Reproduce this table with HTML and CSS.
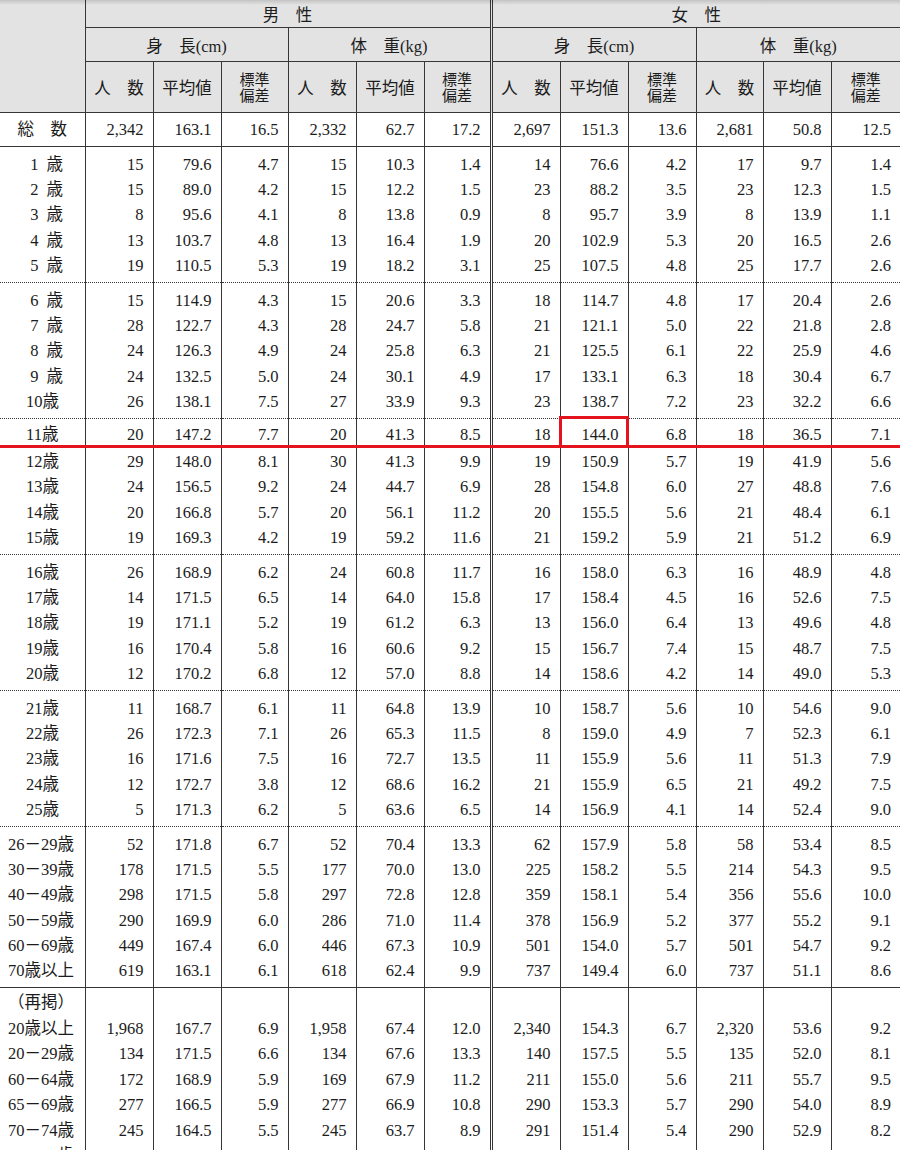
FILE: index.html
```html
<!DOCTYPE html>
<html lang="ja">
<head>
<meta charset="utf-8">
<title>身長・体重の平均値及び標準偏差</title>
<link rel="stylesheet" href="styles.css">
</head>
<body>
<div class="wrap">
<table class="stats">
<colgroup>
<col class="c-label"><col class="c68"><col class="c68"><col class="c67"><col class="c68"><col class="c68"><col class="c67"><col class="c69"><col class="c68"><col class="c68"><col class="c67"><col class="c68"><col class="c69">
</colgroup>
<thead>
<tr class="h1">
<th class="corner" rowspan="3"></th>
<th colspan="6">男　性</th>
<th colspan="6" class="fem">女　性</th>
</tr>
<tr class="h2">
<th colspan="3">身　長(cm)</th>
<th colspan="3">体　重(kg)</th>
<th colspan="3" class="fem">身　長(cm)</th>
<th colspan="3">体　重(kg)</th>
</tr>
<tr class="h3">
<th>人　数</th><th>平均値</th><th class="sd">標準<br>偏差</th>
<th>人　数</th><th>平均値</th><th class="sd">標準<br>偏差</th>
<th class="fem">人　数</th><th>平均値</th><th class="sd">標準<br>偏差</th>
<th>人　数</th><th>平均値</th><th class="sd">標準<br>偏差</th>
</tr>
</thead>
<tbody>
<tr class="total"><td class="lab center">総　数</td><td>2,342</td><td>163.1</td><td>16.5</td><td>2,332</td><td>62.7</td><td>17.2</td><td class="fem">2,697</td><td>151.3</td><td>13.6</td><td>2,681</td><td>50.8</td><td>12.5</td></tr>

<tr class="top"><td class="lab age"><span class="one">1</span>歳</td><td>15</td><td>79.6</td><td>4.7</td><td>15</td><td>10.3</td><td>1.4</td><td class="fem">14</td><td>76.6</td><td>4.2</td><td>17</td><td>9.7</td><td>1.4</td></tr>
<tr><td class="lab age"><span class="one">2</span>歳</td><td>15</td><td>89.0</td><td>4.2</td><td>15</td><td>12.2</td><td>1.5</td><td class="fem">23</td><td>88.2</td><td>3.5</td><td>23</td><td>12.3</td><td>1.5</td></tr>
<tr><td class="lab age"><span class="one">3</span>歳</td><td>8</td><td>95.6</td><td>4.1</td><td>8</td><td>13.8</td><td>0.9</td><td class="fem">8</td><td>95.7</td><td>3.9</td><td>8</td><td>13.9</td><td>1.1</td></tr>
<tr><td class="lab age"><span class="one">4</span>歳</td><td>13</td><td>103.7</td><td>4.8</td><td>13</td><td>16.4</td><td>1.9</td><td class="fem">20</td><td>102.9</td><td>5.3</td><td>20</td><td>16.5</td><td>2.6</td></tr>
<tr class="bot"><td class="lab age"><span class="one">5</span>歳</td><td>19</td><td>110.5</td><td>5.3</td><td>19</td><td>18.2</td><td>3.1</td><td class="fem">25</td><td>107.5</td><td>4.8</td><td>25</td><td>17.7</td><td>2.6</td></tr>

<tr class="top sep"><td class="lab age"><span class="one">6</span>歳</td><td>15</td><td>114.9</td><td>4.3</td><td>15</td><td>20.6</td><td>3.3</td><td class="fem">18</td><td>114.7</td><td>4.8</td><td>17</td><td>20.4</td><td>2.6</td></tr>
<tr><td class="lab age"><span class="one">7</span>歳</td><td>28</td><td>122.7</td><td>4.3</td><td>28</td><td>24.7</td><td>5.8</td><td class="fem">21</td><td>121.1</td><td>5.0</td><td>22</td><td>21.8</td><td>2.8</td></tr>
<tr><td class="lab age"><span class="one">8</span>歳</td><td>24</td><td>126.3</td><td>4.9</td><td>24</td><td>25.8</td><td>6.3</td><td class="fem">21</td><td>125.5</td><td>6.1</td><td>22</td><td>25.9</td><td>4.6</td></tr>
<tr><td class="lab age"><span class="one">9</span>歳</td><td>24</td><td>132.5</td><td>5.0</td><td>24</td><td>30.1</td><td>4.9</td><td class="fem">17</td><td>133.1</td><td>6.3</td><td>18</td><td>30.4</td><td>6.7</td></tr>
<tr class="bot"><td class="lab age">10歳</td><td>26</td><td>138.1</td><td>7.5</td><td>27</td><td>33.9</td><td>9.3</td><td class="fem">23</td><td>138.7</td><td>7.2</td><td>23</td><td>32.2</td><td>6.6</td></tr>

<tr class="sep r11"><td class="lab age">11歳</td><td>20</td><td>147.2</td><td>7.7</td><td>20</td><td>41.3</td><td>8.5</td><td class="fem">18</td><td>144.0</td><td>6.8</td><td>18</td><td>36.5</td><td>7.1</td></tr>
<tr class="r12"><td class="lab age">12歳</td><td>29</td><td>148.0</td><td>8.1</td><td>30</td><td>41.3</td><td>9.9</td><td class="fem">19</td><td>150.9</td><td>5.7</td><td>19</td><td>41.9</td><td>5.6</td></tr>
<tr><td class="lab age">13歳</td><td>24</td><td>156.5</td><td>9.2</td><td>24</td><td>44.7</td><td>6.9</td><td class="fem">28</td><td>154.8</td><td>6.0</td><td>27</td><td>48.8</td><td>7.6</td></tr>
<tr><td class="lab age">14歳</td><td>20</td><td>166.8</td><td>5.7</td><td>20</td><td>56.1</td><td>11.2</td><td class="fem">20</td><td>155.5</td><td>5.6</td><td>21</td><td>48.4</td><td>6.1</td></tr>
<tr class="bot"><td class="lab age">15歳</td><td>19</td><td>169.3</td><td>4.2</td><td>19</td><td>59.2</td><td>11.6</td><td class="fem">21</td><td>159.2</td><td>5.9</td><td>21</td><td>51.2</td><td>6.9</td></tr>

<tr class="top sep"><td class="lab age">16歳</td><td>26</td><td>168.9</td><td>6.2</td><td>24</td><td>60.8</td><td>11.7</td><td class="fem">16</td><td>158.0</td><td>6.3</td><td>16</td><td>48.9</td><td>4.8</td></tr>
<tr><td class="lab age">17歳</td><td>14</td><td>171.5</td><td>6.5</td><td>14</td><td>64.0</td><td>15.8</td><td class="fem">17</td><td>158.4</td><td>4.5</td><td>16</td><td>52.6</td><td>7.5</td></tr>
<tr><td class="lab age">18歳</td><td>19</td><td>171.1</td><td>5.2</td><td>19</td><td>61.2</td><td>6.3</td><td class="fem">13</td><td>156.0</td><td>6.4</td><td>13</td><td>49.6</td><td>4.8</td></tr>
<tr><td class="lab age">19歳</td><td>16</td><td>170.4</td><td>5.8</td><td>16</td><td>60.6</td><td>9.2</td><td class="fem">15</td><td>156.7</td><td>7.4</td><td>15</td><td>48.7</td><td>7.5</td></tr>
<tr class="bot"><td class="lab age">20歳</td><td>12</td><td>170.2</td><td>6.8</td><td>12</td><td>57.0</td><td>8.8</td><td class="fem">14</td><td>158.6</td><td>4.2</td><td>14</td><td>49.0</td><td>5.3</td></tr>

<tr class="top sep"><td class="lab age">21歳</td><td>11</td><td>168.7</td><td>6.1</td><td>11</td><td>64.8</td><td>13.9</td><td class="fem">10</td><td>158.7</td><td>5.6</td><td>10</td><td>54.6</td><td>9.0</td></tr>
<tr><td class="lab age">22歳</td><td>26</td><td>172.3</td><td>7.1</td><td>26</td><td>65.3</td><td>11.5</td><td class="fem">8</td><td>159.0</td><td>4.9</td><td>7</td><td>52.3</td><td>6.1</td></tr>
<tr><td class="lab age">23歳</td><td>16</td><td>171.6</td><td>7.5</td><td>16</td><td>72.7</td><td>13.5</td><td class="fem">11</td><td>155.9</td><td>5.6</td><td>11</td><td>51.3</td><td>7.9</td></tr>
<tr><td class="lab age">24歳</td><td>12</td><td>172.7</td><td>3.8</td><td>12</td><td>68.6</td><td>16.2</td><td class="fem">21</td><td>155.9</td><td>6.5</td><td>21</td><td>49.2</td><td>7.5</td></tr>
<tr class="bot"><td class="lab age">25歳</td><td>5</td><td>171.3</td><td>6.2</td><td>5</td><td>63.6</td><td>6.5</td><td class="fem">14</td><td>156.9</td><td>4.1</td><td>14</td><td>52.4</td><td>9.0</td></tr>

<tr class="top sep"><td class="lab">26－29歳</td><td>52</td><td>171.8</td><td>6.7</td><td>52</td><td>70.4</td><td>13.3</td><td class="fem">62</td><td>157.9</td><td>5.8</td><td>58</td><td>53.4</td><td>8.5</td></tr>
<tr><td class="lab">30－39歳</td><td>178</td><td>171.5</td><td>5.5</td><td>177</td><td>70.0</td><td>13.0</td><td class="fem">225</td><td>158.2</td><td>5.5</td><td>214</td><td>54.3</td><td>9.5</td></tr>
<tr><td class="lab">40－49歳</td><td>298</td><td>171.5</td><td>5.8</td><td>297</td><td>72.8</td><td>12.8</td><td class="fem">359</td><td>158.1</td><td>5.4</td><td>356</td><td>55.6</td><td>10.0</td></tr>
<tr><td class="lab">50－59歳</td><td>290</td><td>169.9</td><td>6.0</td><td>286</td><td>71.0</td><td>11.4</td><td class="fem">378</td><td>156.9</td><td>5.2</td><td>377</td><td>55.2</td><td>9.1</td></tr>
<tr><td class="lab">60－69歳</td><td>449</td><td>167.4</td><td>6.0</td><td>446</td><td>67.3</td><td>10.9</td><td class="fem">501</td><td>154.0</td><td>5.7</td><td>501</td><td>54.7</td><td>9.2</td></tr>
<tr class="bot"><td class="lab">70歳以上</td><td>619</td><td>163.1</td><td>6.1</td><td>618</td><td>62.4</td><td>9.9</td><td class="fem">737</td><td>149.4</td><td>6.0</td><td>737</td><td>51.1</td><td>8.6</td></tr>

<tr class="top2 solid"><td class="lab">（再掲）</td><td></td><td></td><td></td><td></td><td></td><td></td><td class="fem"></td><td></td><td></td><td></td><td></td><td></td></tr>
<tr class="rk"><td class="lab">20歳以上</td><td>1,968</td><td>167.7</td><td>6.9</td><td>1,958</td><td>67.4</td><td>12.0</td><td class="fem">2,340</td><td>154.3</td><td>6.7</td><td>2,320</td><td>53.6</td><td>9.2</td></tr>
<tr class="rk"><td class="lab">20－29歳</td><td>134</td><td>171.5</td><td>6.6</td><td>134</td><td>67.6</td><td>13.3</td><td class="fem">140</td><td>157.5</td><td>5.5</td><td>135</td><td>52.0</td><td>8.1</td></tr>
<tr class="rk"><td class="lab">60－64歳</td><td>172</td><td>168.9</td><td>5.9</td><td>169</td><td>67.9</td><td>11.2</td><td class="fem">211</td><td>155.0</td><td>5.6</td><td>211</td><td>55.7</td><td>9.5</td></tr>
<tr class="rk"><td class="lab">65－69歳</td><td>277</td><td>166.5</td><td>5.9</td><td>277</td><td>66.9</td><td>10.8</td><td class="fem">290</td><td>153.3</td><td>5.7</td><td>290</td><td>54.0</td><td>8.9</td></tr>
<tr class="rk"><td class="lab">70－74歳</td><td>245</td><td>164.5</td><td>5.5</td><td>245</td><td>63.7</td><td>8.9</td><td class="fem">291</td><td>151.4</td><td>5.4</td><td>290</td><td>52.9</td><td>8.2</td></tr>
<tr class="rk"><td class="lab">75－79歳</td><td>204</td><td>163.3</td><td>6.0</td><td>204</td><td>62.3</td><td>11.0</td><td class="fem">210</td><td>148.3</td><td>5.4</td><td>210</td><td>51.4</td><td>8.7</td></tr>
</tbody>
</table>
<div class="shade"></div>
<div class="red-line"></div>
<div class="red-box"></div>
</div>
</body>
</html>
```

FILE: styles.css
```css
html, body {
  margin: 0;
  padding: 0;
  background: #ffffff;
}

.wrap {
  position: relative;
  width: 900px;
  height: 1150px;
  overflow: hidden;
}

.stats {
  border-collapse: collapse;
  table-layout: fixed;
  width: 900px;
  font-family: "Liberation Serif", "Noto Sans CJK JP", serif;
  font-size: 16.5px;
  color: #1c1c1c;
}

.c-label { width: 85px; }
.c67 { width: 67px; }
.c68 { width: 68px; }
.c69 { width: 69px; }

.stats th,
.stats td {
  padding: 0;
  border-left: 1px solid #363636;
}

.stats th {
  background: #e3e3e3;
  font-weight: normal;
  text-align: center;
  vertical-align: middle;
  white-space: nowrap;
}

.stats th.corner {
  border-left: none;
  border-bottom: 1px solid #363636;
}

.h1 th {
  height: 27px;
  border-bottom: 1px solid #363636;
}

.h2 th {
  height: 33px;
  border-bottom: 1px solid #363636;
}

.h3 th {
  height: 49px;
  border-bottom: 1px solid #363636;
}

.h3 th.sd {
  font-size: 15px;
  line-height: 16px;
  padding-top: 1px;
}

.stats .fem {
  border-left: 3px double #363636;
}

.stats td {
  text-align: right;
  padding-right: 9px;
  line-height: 25.2px;
  white-space: nowrap;
  vertical-align: top;
}

.stats td.lab {
  border-left: none;
  text-align: left;
  padding-left: 8px;
  padding-right: 0;
}

.stats td.lab.center {
  text-align: center;
  padding-left: 0;
}

.stats td.lab.age {
  padding-left: 26px;
}

.one {
  display: inline-block;
  width: 16.5px;
  text-align: center;
  margin-right: 4px;
}

.total td {
  height: 33px;
  line-height: 33px;
  border-bottom: 1px solid #363636;
}

.top td {
  padding-top: 5px;
}

.bot td {
  padding-bottom: 4px;
}

.r11 td {
  padding-top: 3px;
}

.r12 td {
  padding-top: 2px;
}

.sep td {
  border-top: 1px dotted #363636;
}

.solid td {
  border-top: 1px solid #363636;
}

.top2 td {
  padding-top: 2px;
}

.rk td {
  line-height: 25.6px;
}

.shade {
  position: absolute;
  left: 0;
  top: 0;
  width: 900px;
  height: 5px;
  background: linear-gradient(rgba(0, 0, 0, 0.14), rgba(0, 0, 0, 0));
}

.red-line {
  position: absolute;
  left: 0;
  top: 445px;
  width: 900px;
  height: 3px;
  background: #e3141d;
}

.red-box {
  position: absolute;
  left: 559px;
  top: 416px;
  width: 70px;
  height: 32px;
  box-sizing: border-box;
  border: 3px solid #e3141d;
}
```
